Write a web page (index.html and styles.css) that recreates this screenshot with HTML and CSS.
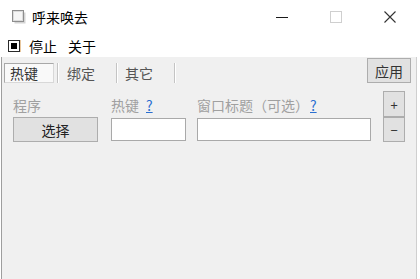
FILE: index.html
```html
<!DOCTYPE html>
<html lang="zh-CN">
<head>
<meta charset="utf-8">
<title>呼来唤去</title>
<link rel="stylesheet" href="styles.css">
</head>
<body>
<div class="window">
  <div class="titlebar">
    <svg class="app-icon" width="14" height="14" viewBox="0 0 14 14">
      <rect x="2.5" y="2.5" width="11" height="11" fill="#d4d4d4"/>
      <rect x="0.5" y="0.5" width="11" height="11" fill="#f6f6f6" stroke="#8e8e8e"/>
      <rect x="1.5" y="1.5" width="9" height="9" fill="none" stroke="#dcdcdc"/>
    </svg>
    <span class="title">呼来唤去</span>
    <div class="controls">
      <div class="ctrl"><svg width="12" height="12" viewBox="0 0 12 12"><line x1="0" y1="6.5" x2="12" y2="6.5" stroke="#1a1a1a"/></svg></div>
      <div class="ctrl"><svg width="12" height="12" viewBox="0 0 12 12"><rect x="0.5" y="0.5" width="11" height="11" fill="none" stroke="#cfcfcf"/></svg></div>
      <div class="ctrl"><svg width="12" height="12" viewBox="0 0 12 12"><path d="M0.5 0.5 L11.5 11.5 M11.5 0.5 L0.5 11.5" stroke="#333" stroke-width="1.1" fill="none"/></svg></div>
    </div>
  </div>
  <div class="menubar">
    <span class="stop-icon"><span class="stop-dot"></span></span>
    <span class="menu-item first">停止</span>
    <span class="menu-item">关于</span>
  </div>
  <div class="content">
    <div class="tabs">
      <div class="tab active">热键</div>
      <div class="sep"></div>
      <div class="tab tab2">绑定</div>
      <div class="sep"></div>
      <div class="tab tab3">其它</div>
      <div class="sep"></div>
      <button class="btn apply">应用</button>
    </div>
    <div class="form">
      <div class="col col1">
        <div class="label">程序</div>
        <button class="btn choose">选择</button>
      </div>
      <div class="col col2">
        <div class="label">热键<a class="help">?</a></div>
        <input class="field" type="text">
      </div>
      <div class="col col3">
        <div class="label">窗口标题（可选）<a class="help tight">?</a></div>
        <input class="field" type="text">
      </div>
      <div class="col4">
        <button class="btn small plus">+</button>
        <button class="btn small minus">−</button>
      </div>
    </div>
  </div>
</div>
</body>
</html>
```
FILE: styles.css
```css
html, body {
  margin: 0;
  padding: 0;
  width: 420px;
  height: 279px;
  overflow: hidden;
  background: #ffffff;
  font-family: "Noto Sans CJK SC", "Noto Sans", sans-serif;
  font-size: 14px;
  color: #1a1a1a;
}

.window {
  display: flex;
  flex-direction: column;
  height: 279px;
}

.titlebar {
  height: 34px;
  display: flex;
  align-items: center;
}

.app-icon {
  margin-left: 12px;
  flex: none;
}

.title {
  margin-left: 6px;
  font-size: 14px;
  line-height: 18px;
  color: #000;
}

.controls {
  margin-left: auto;
  margin-right: 3px;
  display: flex;
}

.ctrl {
  width: 54px;
  height: 34px;
  display: flex;
  align-items: center;
  justify-content: center;
}

.menubar {
  height: 23px;
  display: flex;
  align-items: center;
  padding-left: 8px;
}

.stop-icon {
  width: 12px;
  height: 12px;
  box-sizing: border-box;
  border: 1px solid #2a2a2a;
  background: #fff;
  display: flex;
  align-items: center;
  justify-content: center;
  box-shadow: 1px 0 0 #e8c8a0;
}

.stop-dot {
  width: 6px;
  height: 6px;
  background: #000;
}

.menu-item {
  margin-left: 11px;
  line-height: 18px;
  color: #000;
}

.menu-item.first {
  margin-left: 9px;
}

.content {
  flex: 1;
  background: #f0f0f0;
  margin: 0 3px 0 1px;
  border-left: 1px solid #9e9e9e;
  border-right: 1px solid #cfcfcf;
}

.tabs {
  margin-top: 1px;
  height: 25px;
  display: flex;
  align-items: flex-end;
  padding-left: 2px;
}

.tab {
  height: 20px;
  box-sizing: border-box;
  line-height: 20px;
  color: #555;
}

.tab.active {
  width: 50px;
  padding-left: 5px;
  border: 1px solid #a8a8a8;
  border-right-color: #d8d8d8;
  border-bottom-color: #d8d8d8;
  background: #f9f9f9;
  line-height: 18px;
  color: #333;
  margin-right: 3px;
}

.tab2 {
  width: 57px;
  padding-left: 8px;
}

.tab3 {
  width: 56px;
  padding-left: 7px;
}

.sep {
  width: 1px;
  height: 20px;
  background: #c4c4c4;
  border-right: 1px solid #ffffff;
}

.btn {
  font-family: "Noto Sans CJK SC", "Noto Sans", sans-serif;
  font-size: 14px;
  color: #222;
  background: #e1e1e1;
  border: 1px solid #adadad;
  box-sizing: border-box;
  padding: 0;
  margin: 0;
  display: flex;
  align-items: center;
  justify-content: center;
}

.apply {
  margin-left: auto;
  margin-right: 5px;
  width: 44px;
  height: 25px;
  align-self: flex-start;
  color: #333;
}

.form {
  margin-top: 8px;
  display: flex;
  padding-left: 11px;
}

.col {
  padding-top: 5px;
  display: flex;
  flex-direction: column;
}

.col1 { width: 85px; }
.col2 { width: 75px; margin-left: 13px; }
.col3 { width: 174px; margin-left: 11px; }

.label {
  height: 18px;
  line-height: 18px;
  margin-bottom: 3px;
  color: #a0a0a0;
  white-space: nowrap;
}

.help {
  color: #2a6fd0;
  text-decoration: underline;
  margin-left: 7px;
}

.help.tight {
  margin-left: 1px;
}

.choose {
  width: 85px;
  height: 25px;
}

.field {
  margin: 1px 0 0 0;
  height: 23px;
  box-sizing: border-box;
  border: 1px solid #a9a9a9;
  background: #fff;
  padding: 0 3px;
  outline: none;
  font-family: "Noto Sans CJK SC", "Noto Sans", sans-serif;
  font-size: 14px;
}

.col2 .field { width: 75px; }
.col3 .field { width: 174px; }

.col4 {
  margin-left: 12px;
  width: 22px;
  display: flex;
  flex-direction: column;
}

.small {
  width: 22px;
  font-size: 13px;
  color: #333;
}

.plus { height: 26px; }
.minus { height: 25px; }
```
